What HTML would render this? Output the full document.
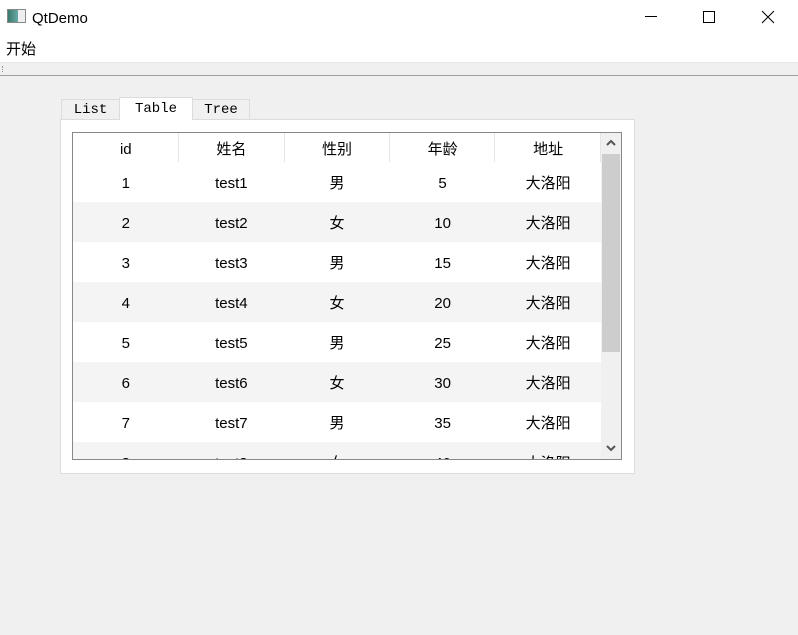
<!DOCTYPE html>
<html><head><meta charset="utf-8"><style>
*{margin:0;padding:0;box-sizing:border-box}
body{width:798px;height:635px;background:#f0f0f0;position:relative;overflow:hidden;font-family:"Liberation Sans","Noto Sans CJK SC",sans-serif;font-size:15px;color:#000}
.abs{position:absolute}
.title{left:0;top:0;width:798px;height:31px;background:#fff}
.menu{left:0;top:31px;width:798px;height:31px;background:#fff}
.tab{position:absolute;font-family:"Liberation Mono","Noto Sans CJK SC",monospace;font-size:14px;text-align:center;border:1px solid #dcdcdc;border-bottom:none}
.cell{position:absolute;width:105.6px;text-align:center;font-size:15px;top:2px;height:40px;line-height:40px}
.hc{position:absolute;width:105.6px;text-align:center;font-size:15px;top:2px;height:30px;line-height:30px}
</style></head><body>
<div class="abs title">
 <div class="abs" style="left:7px;top:9px;width:19px;height:14px;border:1px solid #888;background:linear-gradient(90deg,#3a7a6a 0,#6aa 60%,#eee 60%)"></div>
 <div class="abs" style="left:32px;top:9px;height:20px;line-height:20px;font-size:15px">QtDemo</div>
 <div class="abs" style="left:645px;top:16px;width:12px;height:1px;background:#000"></div>
 <div class="abs" style="left:703px;top:11px;width:12px;height:12px;border:1px solid #000"></div>
 <svg class="abs" style="left:761px;top:10px" width="14" height="14"><path d="M1 1L13 13M13 1L1 13" stroke="#000" stroke-width="1"/></svg>
</div>
<div class="abs menu"><div class="abs" style="left:6px;top:9px;height:20px;line-height:20px;font-size:15px">开始</div></div>
<div class="abs" style="left:0;top:62px;width:798px;height:1px;background:#e8e8e8"></div>
<div class="abs" style="left:0;top:75px;width:798px;height:1px;background:#a0a0a0"></div>
<div class="abs" style="left:2px;top:66px;width:1px;height:6px;border-left:1px dotted #999"></div>

<div class="tab" style="left:61px;top:99px;width:59px;height:21px;background:#f0f0f0;line-height:21px">List</div>
<div class="tab" style="left:192px;top:99px;width:58px;height:21px;background:#f0f0f0;line-height:21px">Tree</div>
<div class="abs" style="left:60px;top:119px;width:575px;height:355px;background:#fff;border:1px solid #dcdcdc"></div>
<div class="tab" style="left:119px;top:97px;width:74px;height:23px;background:#fff;line-height:22px">Table</div>

<div class="abs" style="left:72px;top:132px;width:550px;height:328px;border:1px solid #888;background:#fff;overflow:hidden">
 <div class="abs" style="left:0;top:0;width:528px;height:29px;background:#fff">
  <div class="hc" style="left:0">id</div>
  <div class="hc" style="left:105.6px">姓名</div>
  <div class="hc" style="left:211.2px">性别</div>
  <div class="hc" style="left:316.8px">年龄</div>
  <div class="hc" style="left:422.4px">地址</div>
  <div class="abs" style="left:105px;top:0;width:1px;height:29px;background:#e5e5e5"></div>
  <div class="abs" style="left:211px;top:0;width:1px;height:29px;background:#e5e5e5"></div>
  <div class="abs" style="left:316px;top:0;width:1px;height:29px;background:#e5e5e5"></div>
  <div class="abs" style="left:421px;top:0;width:1px;height:29px;background:#e5e5e5"></div>
  <div class="abs" style="left:527px;top:0;width:1px;height:29px;background:#e5e5e5"></div>
 </div>
 <div id="rows"></div>
 <div class="abs" style="left:528px;top:0;width:20px;height:326px;background:#f0f0f0">
  <svg class="abs" style="left:5px;top:6px" width="10" height="8"><path d="M1 6L5 2L9 6" stroke="#555" stroke-width="2" fill="none"/></svg>
  <div class="abs" style="left:1px;top:21px;width:18px;height:198px;background:#cdcdcd"></div>
  <svg class="abs" style="left:5px;top:311px" width="10" height="8"><path d="M1 2L5 6L9 2" stroke="#555" stroke-width="2" fill="none"/></svg>
 </div>
</div>
<script>
var d=[["1","test1","男","5"],["2","test2","女","10"],["3","test3","男","15"],["4","test4","女","20"],["5","test5","男","25"],["6","test6","女","30"],["7","test7","男","35"],["8","test8","女","40"]];
var h="";d.forEach(function(r,i){var t=29+i*40;h+='<div class="abs" style="left:0;top:'+t+'px;width:528px;height:40px;overflow:visible;background:'+(i%2?'#f4f4f4':'#fff')+'">';
r.concat(["大洛阳"]).forEach(function(c,j){h+='<div class="cell" style="left:'+(j*105.6)+'px">'+c+'</div>'});h+='</div>'});
document.getElementById("rows").innerHTML=h;
</script>
</body></html>
